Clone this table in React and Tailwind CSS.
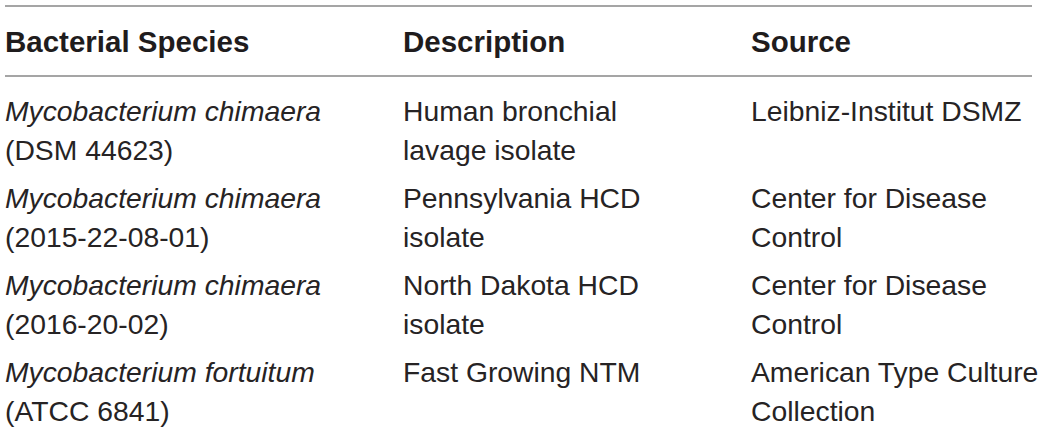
export default function App() {
  const rows = [
    {
      sp: "Mycobacterium chimaera",
      id: "(DSM 44623)",
      desc: ["Human bronchial", "lavage isolate"],
      src: ["Leibniz-Institut DSMZ"],
    },
    {
      sp: "Mycobacterium chimaera",
      id: "(2015-22-08-01)",
      desc: ["Pennsylvania HCD", "isolate"],
      src: ["Center for Disease", "Control"],
    },
    {
      sp: "Mycobacterium chimaera",
      id: "(2016-20-02)",
      desc: ["North Dakota HCD", "isolate"],
      src: ["Center for Disease", "Control"],
    },
    {
      sp: "Mycobacterium fortuitum",
      id: "(ATCC 6841)",
      desc: ["Fast Growing NTM"],
      src: ["American Type Culture", "Collection"],
    },
  ];
  return (
    <div className="w-[1040px] h-[433px] bg-white overflow-hidden pt-[5px] pl-[5px] text-[#262324] font-['Liberation_Sans',Arial,sans-serif]">
      <div className="w-[1027px]">
        <div className="grid grid-cols-[398px_348px_1fr] border-t-2 border-b-2 border-[#a5a5a5] pt-[19px] pb-[17px] text-[29.5px] leading-[32px] font-bold text-[#1f1c1d]">
          <div>Bacterial Species</div>
          <div>Description</div>
          <div>Source</div>
        </div>
        <div className="flex flex-col gap-[9px] pt-[15px] text-[28.3px] leading-[39px]">
          {rows.map((r, i) => (
            <div key={i} className="grid grid-cols-[398px_348px_1fr]">
              <div>
                <div className="italic">{r.sp}</div>
                <div>{r.id}</div>
              </div>
              <div>
                {r.desc.map((d, j) => (
                  <div key={j}>{d}</div>
                ))}
              </div>
              <div className="whitespace-nowrap">
                {r.src.map((d, j) => (
                  <div key={j}>{d}</div>
                ))}
              </div>
            </div>
          ))}
        </div>
      </div>
    </div>
  );
}
